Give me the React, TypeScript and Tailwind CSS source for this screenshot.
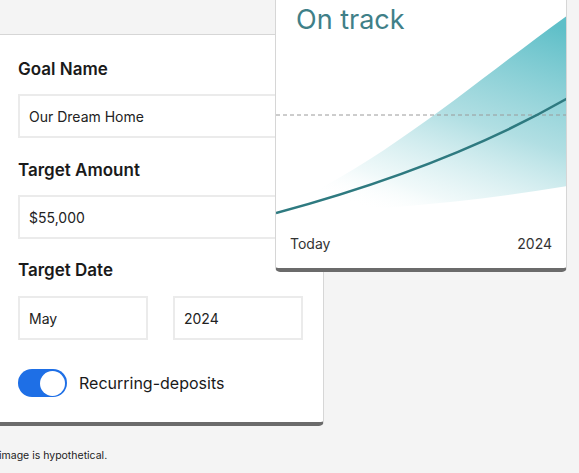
import React from 'react';

const font = { fontFamily: 'Inter, "Noto Sans", sans-serif' };

function Field({ value, className = '' }: { value: string; className?: string }) {
  return (
    <div className={`h-[44px] flex items-center px-[9px] bg-white border-2 border-[#ebebeb] text-[14px] text-[#222] ${className}`}>
      {value}
    </div>
  );
}

function ProjectionChart() {
  return (
    <svg className="absolute inset-0" width="292" height="279" viewBox="0 0 292 279">
      <defs>
        <linearGradient id="band" x1="0.85" y1="0" x2="0.35" y2="1">
          <stop offset="0" stopColor="#5fbfc8" stopOpacity="1" />
          <stop offset="0.5" stopColor="#a3d9de" stopOpacity="0.85" />
          <stop offset="0.85" stopColor="#e6f5f6" stopOpacity="0.6" />
          <stop offset="1" stopColor="#ffffff" stopOpacity="0" />
        </linearGradient>
      </defs>
      <path d="M0,220 C110,170 200,90 292,24 L292,195 C200,210 100,220 0,222 Z" fill="url(#band)" />
      <line x1="0" y1="124" x2="292" y2="124" stroke="#9a9a9a" strokeWidth="1" strokeDasharray="4 3" />
      <path d="M0,222 C100,195 200,160 292,107" fill="none" stroke="#2e7a80" strokeWidth="2.5" />
    </svg>
  );
}

export default function App() {
  return (
    <div className="relative h-[473px] w-[579px] overflow-hidden bg-[#f4f4f4]" style={font}>
      {/* Goal form card */}
      <div className="mt-[34px] -ml-[10px] w-[334px] bg-white border border-[#d6d6d6] border-b-[4px] border-b-[#6b6b6b] rounded-[5px] pl-[27px] pr-[20px] pt-[22px] pb-[25px]">
        <div className="text-[17px] font-semibold text-[#1a1a1a] leading-6">Goal Name</div>
        <Field value="Our Dream Home" className="mt-[13px] w-[300px]" />

        <div className="mt-[20px] text-[17px] font-semibold text-[#1a1a1a] leading-6">Target Amount</div>
        <Field value="$55,000" className="mt-[13px] w-[300px]" />

        <div className="mt-[19px] text-[17px] font-semibold text-[#1a1a1a] leading-6">Target Date</div>
        <div className="mt-[14px] flex gap-[25px]">
          <Field value="May" className="w-[130px]" />
          <Field value="2024" className="w-[130px]" />
        </div>

        <div className="mt-[29px] flex items-center gap-[12px]">
          <div className="w-[49px] h-[28px] rounded-full bg-[#1e6fe6] flex items-center justify-end p-[2px]">
            <div className="w-[25px] h-[25px] rounded-full bg-white" />
          </div>
          <span className="text-[16px] text-[#1a1a1a]">Recurring-deposits</span>
        </div>
      </div>

      <p className="mt-[22px] -ml-[1px] text-[10.5px] text-[#222]">image is hypothetical.</p>

      {/* Projection card, overlapping the form */}
      <div className="absolute left-[275px] top-[-10px] w-[292px] h-[282px] bg-white border border-[#d6d6d6] border-b-[4px] border-b-[#6b6b6b] rounded-[5px] overflow-hidden">
        <ProjectionChart />
        <div className="relative flex flex-col h-full">
          <div className="pl-[20px] pt-[13px] text-[27px] leading-8 text-[#3f8088]">On track</div>
          <div className="mt-auto mb-[14px] px-[14px] flex justify-between text-[14px] text-[#333]">
            <span>Today</span>
            <span>2024</span>
          </div>
        </div>
      </div>
    </div>
  );
}
